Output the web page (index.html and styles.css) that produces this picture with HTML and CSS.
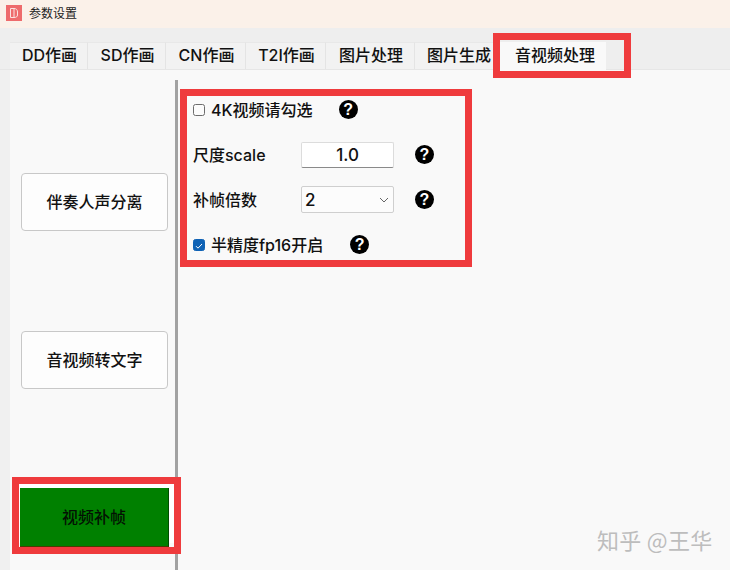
FILE: index.html
```html
<!DOCTYPE html>
<html lang="zh">
<head>
<meta charset="utf-8">
<title>参数设置</title>
<link rel="stylesheet" href="styles.css">
</head>
<body>
<div class="window">
  <header class="titlebar">
    <svg class="app-icon" width="16" height="16" viewBox="0 0 16 16"><rect width="16" height="16" fill="#ee6b6c"/><path d="M4.500 3.500h3.500v9H4.500z" fill="none" stroke="#fbe3e0" stroke-width="1"/><path d="M8 3.500c2.500 0 3.500 1.500 3.500 3.500v3c0 1.500-1 2.500-3.500 2.500" fill="none" stroke="#fbe3e0" stroke-width="1"/></svg>
    <span class="title">参数设置</span>
  </header>
  <nav class="tabs">
    <div class="tab t1">DD作画</div>
    <div class="tab t2">SD作画</div>
    <div class="tab t3">CN作画</div>
    <div class="tab t4">T2I作画</div>
    <div class="tab t5">图片处理</div>
    <div class="tab t6">图片生成</div>
    <div class="tab active">音视频处理</div>
  </nav>
  <main class="pane">
    <aside class="sidebar">
      <button class="side-btn">伴奏人声分离</button>
      <button class="side-btn second">音视频转文字</button>
      <button class="side-btn selected">视频补帧</button>
    </aside>
    <div class="splitter"></div>
    <section class="form">
      <div class="row">
        <span class="check"></span>
        <span class="check-label">4K视频请勾选</span>
        <span class="help h1">?</span>
      </div>
      <div class="row">
        <span class="label">尺度scale</span>
        <input class="field number" value="1.0">
        <span class="help h2">?</span>
      </div>
      <div class="row">
        <span class="label">补帧倍数</span>
        <div class="field combo">
          <span>2</span>
          <svg width="10" height="6" viewBox="0 0 10 6"><path d="M1 1l4 4 4-4" fill="none" stroke="#666" stroke-width="1"/></svg>
        </div>
        <span class="help h2">?</span>
      </div>
      <div class="row">
        <span class="check on"><svg width="12" height="12" viewBox="0 0 12 12"><path d="M2.400 6.200l2.400 2.400 4.800-5" fill="none" stroke="#fff" stroke-width="1.200"/></svg></span>
        <span class="check-label">半精度fp16开启</span>
        <span class="help h3">?</span>
      </div>
    </section>
  </main>
  <div class="mark mark-tab"></div>
  <div class="mark mark-form"></div>
  <div class="mark mark-btn"></div>
  <div class="watermark">知乎 @王华</div>
</div>
</body>
</html>
```

FILE: styles.css
```css
* { box-sizing: border-box; }
html, body { margin: 0; padding: 0; }
body {
  width: 730px;
  height: 570px;
  overflow: hidden;
  font-family: "Inter", "Noto Sans CJK SC", "Noto Sans", sans-serif;
  color: #111;
}
.window {
  position: relative;
  width: 730px;
  height: 570px;
  background: #f0f0f0;
  display: flex;
  flex-direction: column;
}
.titlebar {
  height: 28px;
  background: #fbf1e9;
  display: flex;
  align-items: center;
  padding-left: 6px;
  gap: 7px;
}
.app-icon { display: block; margin-top: -2px; }
.title { font-size: 12px; color: #222; margin-top: -3px; }
.tabs {
  height: 42px;
  padding: 14px 0 0 10px;
  display: flex;
  background: #eeeeee;
  border-bottom: 1px solid #e6e6e6;
}
.tab {
  height: 27px;
  display: flex;
  align-items: center;
  justify-content: center;
  padding: 0 0 4px 2px;
  font-size: 16px;
  font-weight: 500;
  background: #f2f2f2;
  border-right: 1px solid #e4e4e4;
  border-top: 1px solid #e8e8e8;
}
.t1, .t2 { width: 78px; }
.t3, .t4 { width: 80px; }
.t5 { width: 89px; }
.t6 { width: 85px; padding-left: 4px; }
.active {
  width: 106px;
  height: 28px;
  padding-left: 4px;
  background: #f9f9f9;
  border: 0;
}
.pane {
  flex: 1;
  margin-left: 10px;
  background: #f9f9f9;
  display: flex;
  min-height: 0;
}
.sidebar {
  width: 165px;
  padding: 103px 0 0 11px;
  display: flex;
  flex-direction: column;
}
.side-btn {
  width: 147px;
  height: 58px;
  background: #fdfdfd;
  border: 1px solid #c8c8c8;
  border-radius: 4px;
  font: 500 16px "Inter", "Noto Sans CJK SC", sans-serif;
  color: #111;
  padding: 0 0 3px;
}
.second { margin-top: 100px; }
.selected {
  width: 149px;
  height: 59px;
  margin: 99px 0 0 -1px;
  background: #008000;
  border: 0;
  border-right: 1px solid #004d00;
  border-bottom: 1px solid #4d3a00;
  border-radius: 0;
  box-shadow: 5px -4px 0 #fff, -1px -4px 0 #fff;
  color: #031203;
}
.splitter {
  width: 3px;
  margin-top: 10px;
  background: #a2a2a2;
}
.form {
  flex: 1;
  padding: 17px 0 0 15px;
  display: flex;
  flex-direction: column;
}
.row {
  height: 45px;
  display: flex;
  align-items: center;
  font-size: 16px;
  font-weight: 500;
}
.check {
  width: 12px;
  height: 12px;
  border: 1px solid #6c6c6c;
  border-radius: 2.500px;
  background: #fbfbfb;
  display: flex;
}
.check.on { background: #0f62b5; border-color: #0f62b5; }
.check-label { margin-left: 6px; padding-bottom: 2px; }
.label { width: 108px; padding-bottom: 2px; }
.field {
  width: 93px;
  background: #fff;
  border: 1px solid #dcdcdc;
  border-radius: 2px;
  font: 500 17px "Inter", "Noto Sans CJK SC", sans-serif;
  color: #111;
}
.number {
  height: 26px;
  text-align: center;
  border-bottom: 1px solid #8a8a8a;
  padding: 0;
  outline: 0;
  background: #fff;
}
.combo {
  height: 27px;
  background: #fcfcfc;
  border-color: #cfcfcf;
  display: flex;
  align-items: center;
  justify-content: space-between;
  padding: 0 4px 0 3px;
}
.help {
  width: 19px;
  height: 19px;
  border-radius: 50%;
  background: #000;
  color: #fff;
  font: 700 16px/19px "Liberation Sans", sans-serif;
  text-align: center;
  flex: none;
}
.h1 { margin-left: 26px; }
.h2 { margin-left: 21px; }
.h3 { margin-left: 27px; }
.mark {
  position: absolute;
  border: 7px solid #ef3b3d;
  pointer-events: none;
}
.mark-tab { left: 493px; top: 33px; width: 138px; height: 45px; }
.mark-form { left: 180px; top: 89px; width: 292px; height: 178px; }
.mark-btn { left: 12px; top: 477px; width: 169px; height: 77px; }
.watermark {
  position: absolute;
  left: 597px;
  top: 524px;
  font: 400 22px/30px "Noto Sans CJK SC", sans-serif;
  letter-spacing: 0.300px;
  color: #bdbdbd;
  white-space: nowrap;
}
```
